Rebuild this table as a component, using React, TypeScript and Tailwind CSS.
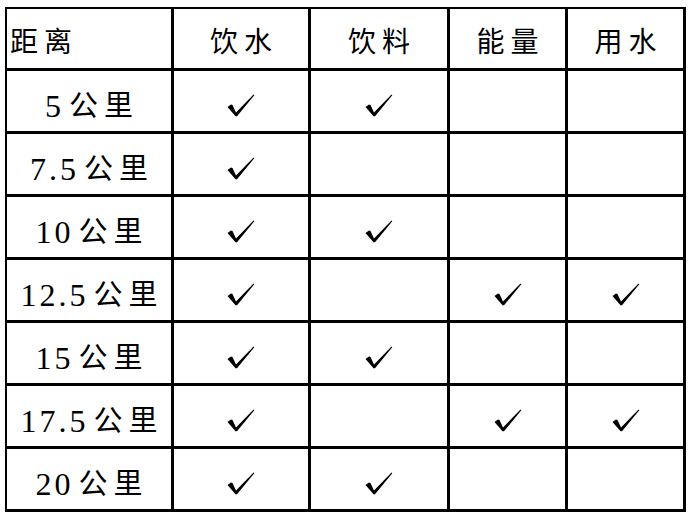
import React from 'react';

const headers = ['距离', '饮水', '饮料', '能量', '用水'];

const rows: { km: string; marks: boolean[] }[] = [
  { km: '5', marks: [true, true, false, false] },
  { km: '7.5', marks: [true, false, false, false] },
  { km: '10', marks: [true, true, false, false] },
  { km: '12.5', marks: [true, false, true, true] },
  { km: '15', marks: [true, true, false, false] },
  { km: '17.5', marks: [true, false, true, true] },
  { km: '20', marks: [true, true, false, false] },
];

const Check = () => (
  <svg width="28" height="23" viewBox="0 0 28 23" className="block">
    <path d="M0.5 13 L4 10.5 L5.5 11 L9 18.5 L26.5 0.5 L27.3 1.2 L10 22.3 L8.5 22.3 Z" fill="#000" />
  </svg>
);

export default function App() {
  return (
    <div className="w-[690px] h-[515px] bg-white pl-[5px] pt-[7px]" style={{ fontFamily: '"Liberation Serif", "Noto Sans CJK SC", serif' }}>
      <div className="inline-grid grid-cols-[164px_134px_136px_115px_115px] grid-rows-[59px_repeat(7,60px)] gap-[3px] bg-black border-t-2 border-l-2 border-r-[3px] border-b-[3px] border-black">
        {headers.map((h, i) => (
          <div
            key={h + i}
            className={`bg-white flex items-center pt-[9px] text-[28px] leading-none tracking-[6px] text-black ${i === 0 ? 'justify-start pl-[3px]' : 'justify-center pl-[6px]'}`}
          >
            {h}
          </div>
        ))}
        {rows.map((r) => (
          <React.Fragment key={r.km}>
            <div className="bg-white flex items-baseline justify-center pt-[10px] pl-[6px] leading-none text-black self-stretch items-center">
              <span className="text-[32px] tracking-[3px] mr-[5px]">{r.km}</span>
              <span className="text-[29px] tracking-[6px]">公里</span>
            </div>
            {r.marks.map((m, j) => (
              <div key={j} className="bg-white flex items-center justify-center pt-[8px]">
                {m && <Check />}
              </div>
            ))}
          </React.Fragment>
        ))}
      </div>
    </div>
  );
}
